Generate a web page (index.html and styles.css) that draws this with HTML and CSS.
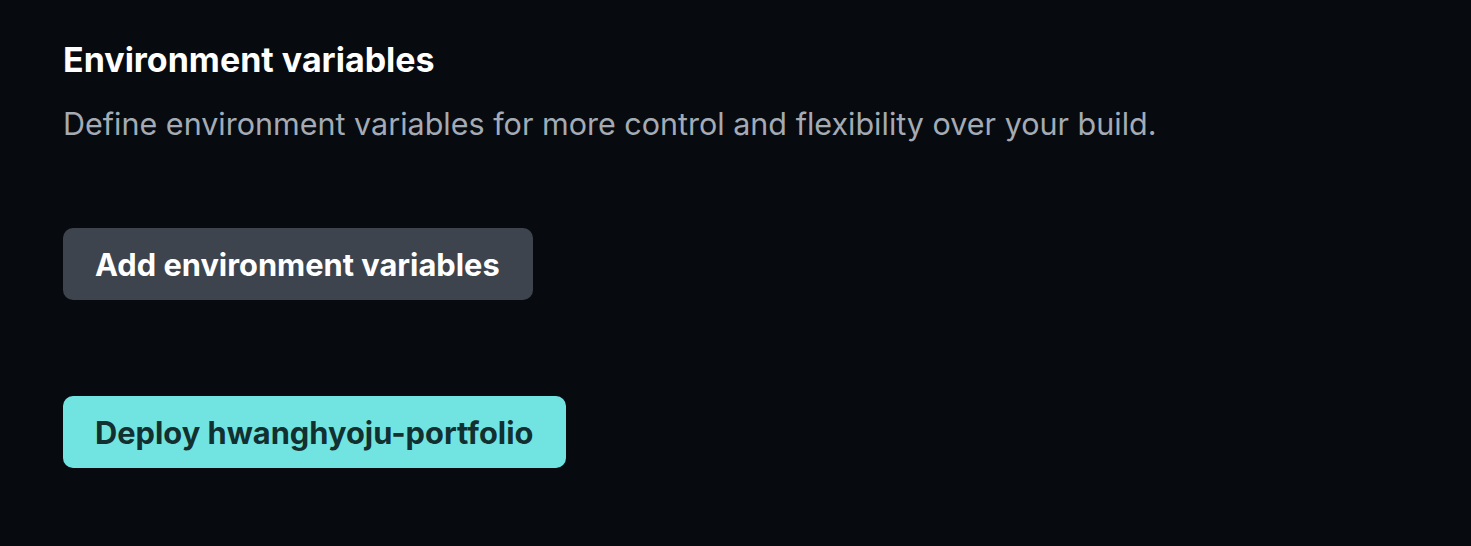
FILE: index.html
```html
<!DOCTYPE html>
<html>
<head>
<meta charset="utf-8">
<link rel="stylesheet" href="styles.css">
</head>
<body>
<section class="panel">
  <h2 class="title">Environment variables</h2>
  <p class="desc">Define environment variables for more control and flexibility over your build.</p>
  <div class="actions">
    <button class="btn btn-secondary">Add environment variables</button>
  </div>
  <div class="deploy">
    <button class="btn btn-primary">Deploy hwanghyoju-portfolio</button>
  </div>
</section>
</body>
</html>
```
FILE: styles.css
```css
html, body {
  margin: 0;
  padding: 0;
  background: #070a0f;
  height: 100%;
}
body {
  font-family: Inter, "Noto Sans", sans-serif;
}
.panel {
  padding: 39px 63px;
}
.title {
  margin: 0;
  color: #ffffff;
  font-size: 34px;
  font-weight: 700;
  line-height: 42px;
}
.desc {
  margin: 23px 0 0;
  color: #a4abb4;
  font-size: 30.5px;
  line-height: 40px;
}
.actions {
  margin-top: 84px;
}
.deploy {
  margin-top: 96px;
}
.btn {
  display: block;
  font-family: inherit;
  font-size: 30.8px;
  font-weight: 700;
  border: none;
  border-radius: 10px;
  height: 72px;
  padding: 0 33px 0 32px;
  cursor: pointer;
}
.btn-secondary {
  background: #3e444d;
  color: #ffffff;
}
.btn-primary {
  background: #71e4e1;
  color: #12302f;
}
```
